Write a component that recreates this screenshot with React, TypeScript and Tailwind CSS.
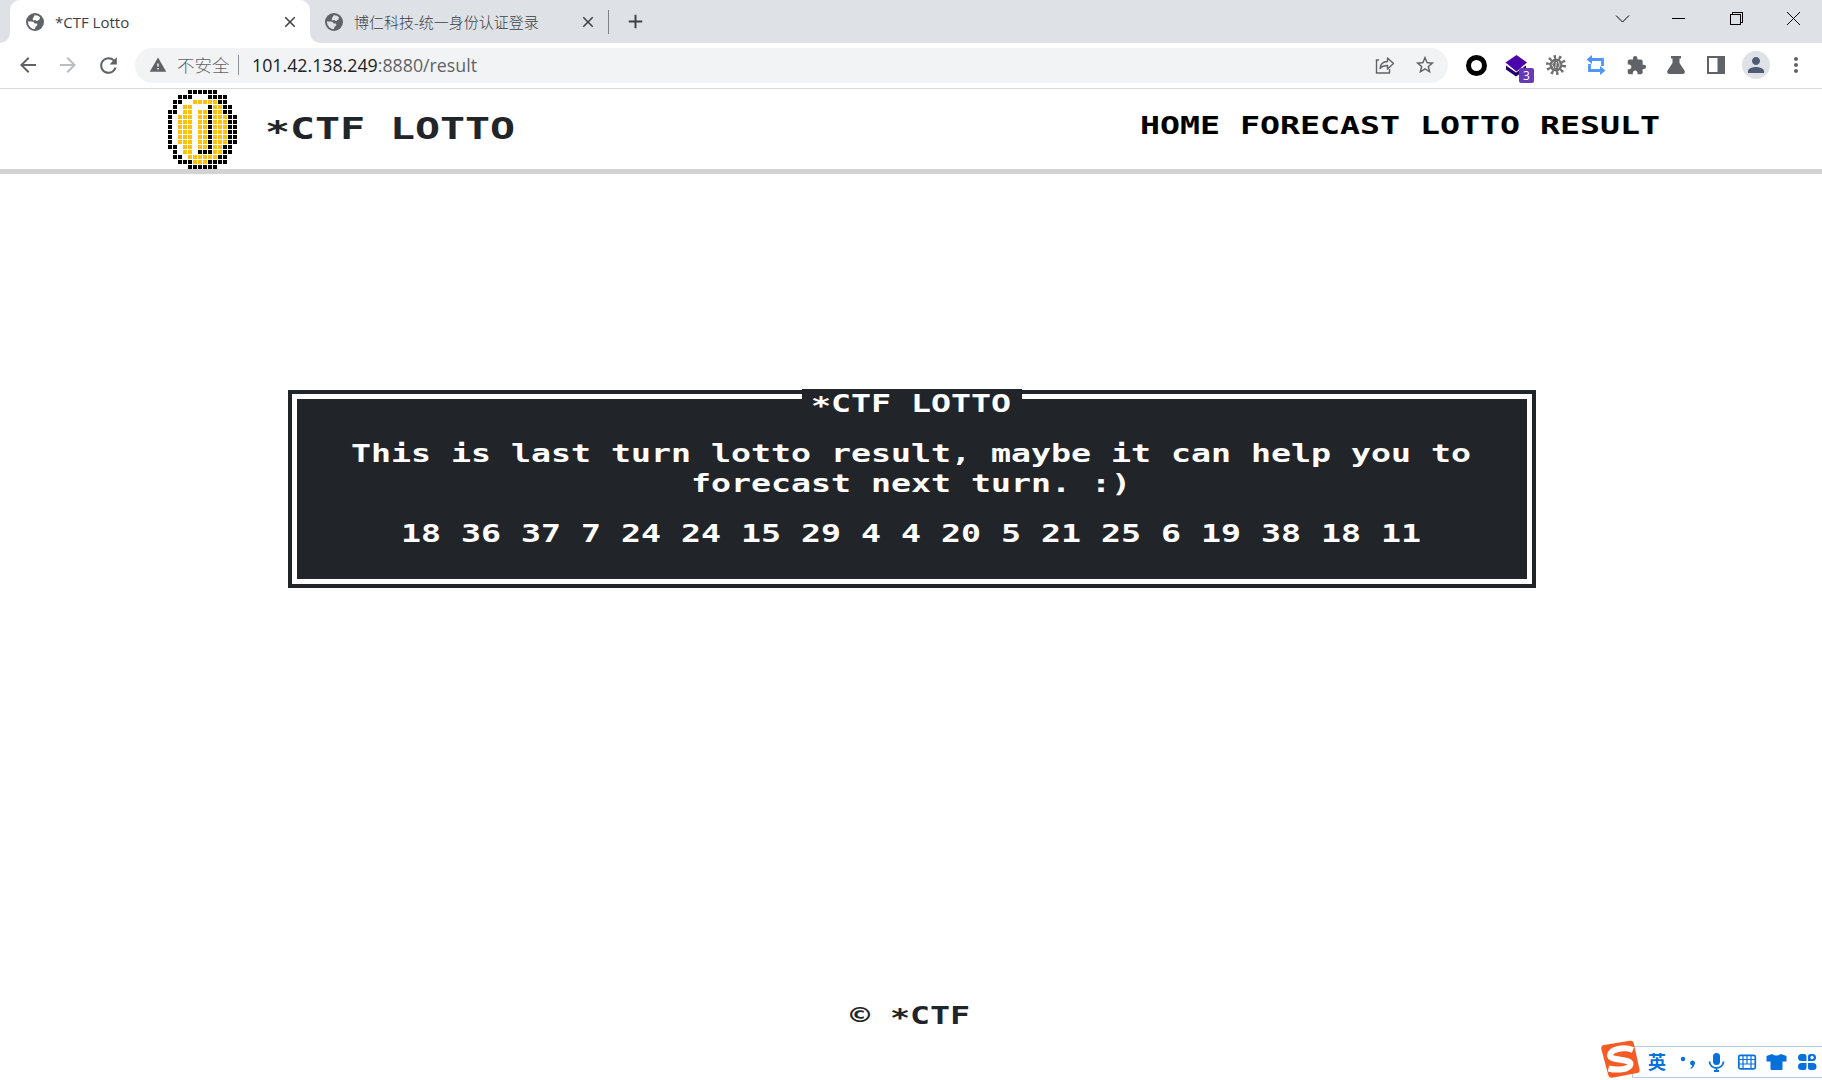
import type { ReactNode } from "react";
import {
  MdAdd,
  MdArrowBack,
  MdArrowForward,
  MdClose,
  MdExtension,
  MdMoreVert,
  MdPerson,
  MdRefresh,
  MdStarBorder,
  MdWarning,
} from "react-icons/md";

const COIN = [
  "....KKKKKK....",
  "..KKK...KKKK..",
  ".KK..YYYYYKK..",
  ".K.YY...KYYKK.",
  "KK.YY.YYKYYKK.",
  "K.YYY.YYKYYYKK",
  "K.YYY.YYKYYYKK",
  "K.YYY.YYKYYYKK",
  "K.YYY.YYKYYYKK",
  "K.YYY.YYKYYYKK",
  "K.YYY.YYKYYYKK",
  "KK.YY.YYKYYKK.",
  ".K.YY.KKKYYKK.",
  ".KK.YYYYYYKK..",
  "..KKKYYYKKKK..",
  "....KKKKKK....",
];

function Coin() {
  return (
    <svg width="70" height="80" className="block" shapeRendering="crispEdges">
      {COIN.flatMap((row, y) =>
        row.split("").map((c, x) =>
          c === "." ? null : (
            <rect key={`${x}-${y}`} x={x * 5} y={y * 5} width="4" height="4" fill={c === "K" ? "#000" : "#ffc107"} />
          ),
        ),
      )}
    </svg>
  );
}

function Globe({ land }: { land: string }) {
  return (
    <svg width="18" height="18" viewBox="0 0 18 18" className="shrink-0">
      <circle cx="9" cy="9" r="9" fill="#5f6368" />
      <path
        d="M8.500 2.200q3.500-.4 5.500 2l-.5 2.300q-1.500.3-2 1.500-1.500.2-2-1l-2.500.6q-.8-1.800.3-2.800zM1.800 8.500h4q2 .2 3 2h2.200q1 1.500-.5 2.500-1.500.6-1.500 3-2.500.2-4.500-1.500Q2 12.500 1.800 8.500z"
        fill={land}
      />
    </svg>
  );
}

/* Wide monospaced lettering; every character takes a fixed advance. */
function Pixel({ text, big = false }: { text: string; big?: boolean }) {
  return (
    <span className="block overflow-visible" style={{ width: text.length * (big ? 25 : 20) }}>
      <span
        className={
          "block w-max origin-left scale-x-[1.3843] whitespace-pre font-['DejaVu_Sans_Mono',monospace] font-bold " +
          (big ? "text-[30px] leading-[30px]" : "text-[24px] leading-[30px]")
        }
      >
        {text.split(/(\*)/).map((part, i) =>
          part === "*" ? (
            <span key={i} className="relative top-[0.09em]">
              *
            </span>
          ) : (
            part
          ),
        )}
      </span>
    </span>
  );
}

function Tab({ title, active = false }: { title: string; active?: boolean }) {
  return (
    <div
      className={
        "flex h-[43px] items-center text-[15px] text-[#3c4043] " +
        (active ? "w-[300px] rounded-t-[10px] bg-white pl-[16px]" : "w-[298px] pl-[15px] font-light")
      }
    >
      <Globe land={active ? "#ffffff" : "#dee1e6"} />
      <span className={active ? "ml-[11px] flex-1 whitespace-nowrap pt-[2px]" : "ml-[11px] flex-1 whitespace-nowrap pt-[2px]"}>
        {title}
      </span>
      <MdClose size={18} className="mr-[11px]" />
    </div>
  );
}

function Cell({ children }: { children: ReactNode }) {
  return <div className="flex w-10 shrink-0 items-center justify-center">{children}</div>;
}

function TabStrip() {
  return (
    <div className="flex h-[43px] bg-[#dee1e6]">
      <div className="h-[43px] w-[10px] bg-white">
        <div className="h-full rounded-br-[10px] bg-[#dee1e6]" />
      </div>
      <Tab title="*CTF Lotto" active />
      <div className="-mr-[10px] h-[43px] w-[10px] bg-[linear-gradient(#dee1e6_0_50%,#fff_50%)]">
        <div className="h-full rounded-bl-[10px] bg-[#dee1e6]" />
      </div>
      <Tab title="博仁科技-统一身份认证登录" />
      <div className="mt-[10px] h-[24px] w-px bg-[#808488]" />
      <div className="flex w-[53px] items-center justify-center text-[#3c4043]">
        <MdAdd size={23} />
      </div>
      <div className="ml-auto flex h-[36px] text-black">
        <svg width="228" height="36" fill="none" stroke="currentColor" strokeWidth="1">
          <path d="M22 15.500l6.500 6.500 6.500-6.500" />
          <path d="M78 18.500h13" shapeRendering="crispEdges" />
          <path d="M136.500 14.500h10v10h-10zM138.500 14v-1.500h10v10h-2" shapeRendering="crispEdges" />
          <path d="M193 12l13 13M206 12l-13 13" />
        </svg>
      </div>
    </div>
  );
}

function Extensions() {
  return (
    <div className="flex h-full">
      <Cell>
        <div className="size-[21px] rounded-full border-[5.500px] border-black" />
      </Cell>
      <Cell>
        <svg width="40" height="40" viewBox="0 0 40 40">
          <path d="M10 20.500l10 7 10-7v4l-10 7-10-7z" fill="#22006b" />
          <path d="M20.500 10l10.500 7.500-10.500 9-11-9z" fill="#4a02ab" />
          <rect x="23" y="23" width="15" height="15" rx="2" fill="#673ab7" />
          <text x="30.500" y="35" fontSize="12" textAnchor="middle" fill="#fff" fontFamily="Open Sans, sans-serif">
            3
          </text>
        </svg>
      </Cell>
      <Cell>
        <svg width="22" height="22" viewBox="-11 -11 22 22" fill="none" stroke="#6e6e6e">
          <circle r="6.500" fill="#6e6e6e" stroke="none" />
          <circle r="8" strokeWidth="4" strokeDasharray="2.300 2.730" />
          <path d="M-2-3.500l-2 3 2 4M2-4l2 4-2 3.500M.5-3l-1 6" stroke="#d5d5d5" strokeWidth="1" />
        </svg>
      </Cell>
      <Cell>
        <svg width="20" height="20" viewBox="0 0 20 20" fill="none" stroke="#4c97f9" strokeWidth="2.800">
          <path d="M4 4.500h12.500V11M16 15.500H3.500V9" />
          <path d="M6 0v9L.5 4.500zM14 11v9l5.500-4.500z" fill="#4c97f9" stroke="none" />
        </svg>
      </Cell>
      <Cell>
        <MdExtension size={21} />
      </Cell>
      <Cell>
        <svg width="20" height="20" viewBox="0 0 20 20" fill="#5f6368">
          <path d="M5 1h10v2.500h-1.500V8l5 7.500c1 1.700 0 3.500-2 3.500h-13c-2 0-3-1.800-2-3.500l5-7.500V3.500H5z" />
        </svg>
      </Cell>
      <Cell>
        <svg width="18" height="18" fill="#5f6368">
          <path fillRule="evenodd" d="M0 0h18v18H0zM2 2v14h8.500V2z" />
        </svg>
      </Cell>
      <Cell>
        <div className="flex size-[28px] items-center justify-center rounded-full bg-[#dee1e6] text-[#4d5b76]">
          <MdPerson size={24} />
        </div>
      </Cell>
      <Cell>
        <MdMoreVert size={24} />
      </Cell>
    </div>
  );
}

function Toolbar() {
  return (
    <div className="flex h-[46px] items-center border-b border-[#d9dadb] bg-white pb-px pl-[8px] pr-[6px] text-[#5f6368]">
      <Cell>
        <MdArrowBack size={24} />
      </Cell>
      <Cell>
        <MdArrowForward size={24} className="text-[#bbbdbf]" />
      </Cell>
      <Cell>
        <MdRefresh size={25} />
      </Cell>
      <div className="ml-[7px] flex h-[35px] w-[1313px] items-center rounded-full bg-[#f1f3f4] pl-[14px] text-[18px]">
        <MdWarning size={18} />
        <span className="ml-[10px] w-[53px] whitespace-nowrap text-[17.500px] font-light">不安全</span>
        <span className="ml-[8px] h-[20px] w-px bg-[#8d9094]" />
        <span className="ml-[13px] w-max origin-left scale-x-[0.987] whitespace-nowrap">
          <span className="text-[#202124]">101.42.138.249</span>:8880/result
        </span>
        <div className="ml-auto flex pr-[3px]">
          <Cell>
            <svg width="20" height="20" viewBox="0 0 20 20" fill="none" stroke="#5f6368" strokeWidth="1.400">
              <path d="M4 5H1.500v13h13v-4" />
              <path d="M5 13.500c.5-4.500 3-7 7.500-7V3l6 5.500-6 5.500v-3.500c-3 0-5.500.7-7.500 3z" strokeLinejoin="round" />
            </svg>
          </Cell>
          <Cell>
            <MdStarBorder size={22} />
          </Cell>
        </div>
      </div>
      <div className="ml-auto h-full">
        <Extensions />
      </div>
    </div>
  );
}

function SiteHeader() {
  return (
    <header className="flex h-[85px] border-b-[5px] border-[#d3d3d3] pl-[168px] pr-[162px] pt-px">
      <Coin />
      <h1 className="ml-[27px] mt-[24px] text-[#212529]">
        <Pixel text="*CTF LOTTO" big />
      </h1>
      <nav className="ml-auto mt-[21px] flex gap-[20px] text-black">
        {["HOME", "FORECAST", "LOTTO", "RESULT"].map((item) => (
          <a key={item}>
            <Pixel text={item} />
          </a>
        ))}
      </nav>
    </header>
  );
}

function ResultPanel() {
  return (
    <section className="ml-[288px] mt-[216px] h-[198px] w-[1248px] bg-[#212529] p-[4px] text-white">
      <div className="flex h-full flex-col items-center border-[5px] border-white">
        <h2 className="-mt-[10px] flex h-[26px] w-[220px] shrink-0 items-center justify-center bg-[#212529] pr-[3px] pt-[4px]">
          <Pixel text="*CTF LOTTO" />
        </h2>
        <div className="mt-[24px] flex flex-col items-center pr-[2px]">
          <Pixel text="This is last turn lotto result, maybe it can help you to" />
          <Pixel text="forecast next turn. :)" />
        </div>
        <div className="mt-[20px] pr-[2px]">
          <Pixel text="18 36 37 7 24 24 15 29 4 4 20 5 21 25 6 19 38 18 11" />
        </div>
      </div>
    </section>
  );
}

function InputMethodBar() {
  return (
    <div className="absolute bottom-0 right-0 flex h-[40px] w-[224px] items-center text-[#0670dc]">
      <svg width="44" height="40" viewBox="0 0 44 40" className="z-10 shrink-0">
        <path d="M6 5L32 .8q3-.5 3.700 2.300L41.500 29.500q.6 3-2.300 3.600L14 37.700q-3 .5-3.700-2.400L3.300 9Q2.700 5.500 6 5z" fill="#f55b23" />
        <path
          d="M35 10C26 6.500 12 9 12 15.500c0 5.500 21 3 20.500 8.500-.5 6-14 6.500-22 4.500"
          fill="none"
          stroke="#fff"
          strokeWidth="6"
        />
      </svg>
      <div className="-ml-[10px] mt-[4px] flex h-[32px] flex-1 items-center border border-[#b5cbe6] bg-white pl-[9px]">
        <span className="flex w-[30px] justify-center text-[18px] font-bold leading-[30px]">英</span>
        <svg width="156" height="30" fill="currentColor" className="shrink-0">
          <circle cx="11" cy="12" r="2.200" />
          <path d="M18 16a2.500 2.500 0 1 1 4.500 1.500q-.5 3-3.500 4.500l-.8-1q2-1 2-2.500-2.200-.5-2.200-2.500z" />
          <rect x="41" y="6" width="7" height="12" rx="3.500" />
          <path d="M37.500 14.500a7 6.500 0 0 0 14 0M44.500 21v3M42 24h5" fill="none" stroke="currentColor" strokeWidth="1.800" />
          <g fill="none" stroke="currentColor" strokeWidth="1.700">
            <rect x="66.800" y="8.300" width="16.500" height="13.500" rx="1.500" />
            <path d="M67 12.500h16M67 17h16M71 8.500v9M75 8.500v9M79 8.500v9M71 17v4.500M79 17v4.500" strokeWidth="1.200" />
          </g>
          <path d="M100 7q4.500 3 9 0l5.500 2v5.500h-4V22q0 1-1 1h-10q-1 0-1-1v-7.500h-4V9z" />
          <g transform="translate(1 0)">
            <path d="M128.500 7h2.500q2.500 0 2.500 2.500V14h-5a3.500 3.500 0 0 1 0-7zM128.500 16h5v4.500q0 2.500-2.500 2.500h-2.500a3.500 3.500 0 0 1 0-7zM135 16h5a3.500 3.500 0 0 1 0 7h-2.500q-2.500 0-2.500-2.500z" />
            <path d="M135 14V9.500q0-2.500 2.500-2.500h2a3.500 3.500 0 0 1 0 7zM139 8.800a1.700 1.700 0 1 0 .1 0z" fillRule="evenodd" />
          </g>
        </svg>
      </div>
    </div>
  );
}

export default function App() {
  return (
    <div className="relative h-[1080px] w-[1822px] overflow-hidden bg-white font-['Open_Sans','Noto_Sans_CJK_SC',sans-serif]">
      <TabStrip />
      <Toolbar />
      <SiteHeader />
      <ResultPanel />
      <footer className="mt-[413px] flex justify-center pr-[2px] text-[#212529]">
        <Pixel text="© *CTF" />
      </footer>
      <InputMethodBar />
    </div>
  );
}
